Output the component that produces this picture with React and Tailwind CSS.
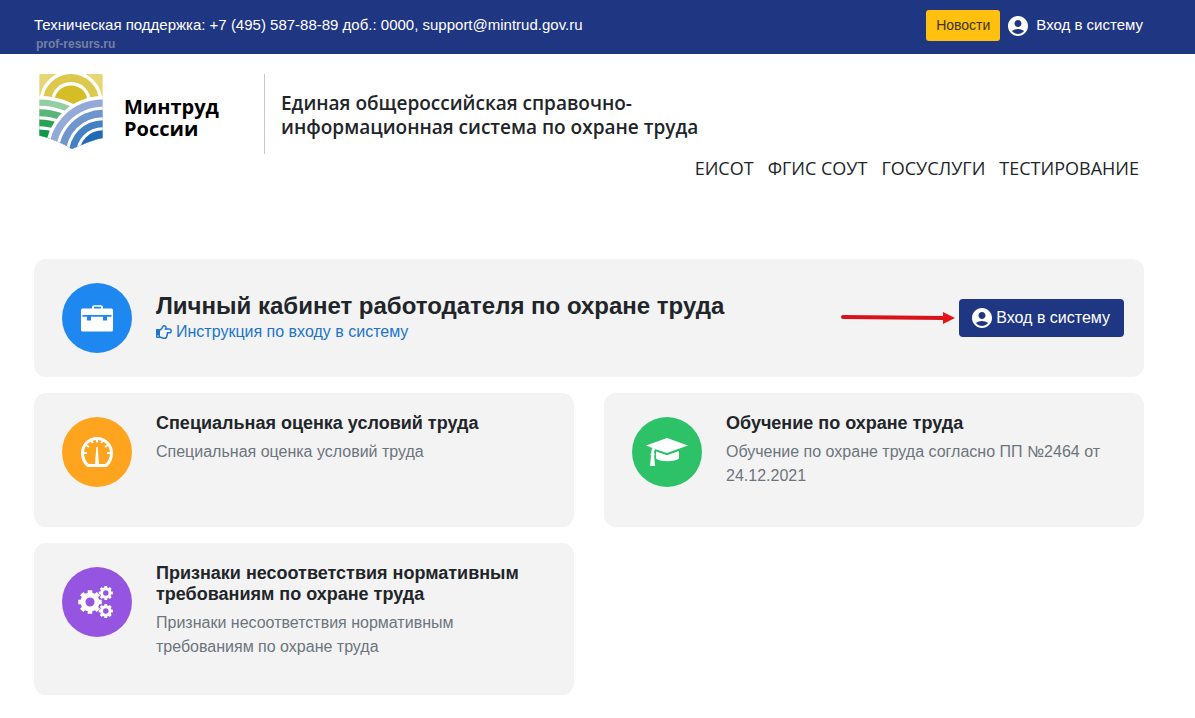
import { MdAccountCircle } from "react-icons/md";
import { FaRegHandPointRight } from "react-icons/fa";

const sans = "font-['Liberation_Sans',Arial,sans-serif]";
const segoe = "font-['Open_Sans','Noto_Sans',sans-serif]";

function Logo() {
  return (
    <svg viewBox="60 42 190 224" className="h-[75px] w-16 shrink-0" aria-hidden="true">
      <defs>
        <clipPath id="shield">
          <path d="M60 42H250V233Q220 238 158 266Q110 238 60 226Z" />
        </clipPath>
      </defs>
      <g clipPath="url(#shield)">
        <rect x="60" y="42" width="190" height="224" fill="#fff" />
        <circle cx="155" cy="126" r="125" fill="#e6d676" />
        <circle cx="155" cy="126" r="94" fill="#fff" />
        <circle cx="155" cy="126" r="84" fill="#ddc84e" />
        <circle cx="155" cy="126" r="60" fill="#fff" />
        <circle cx="155" cy="126" r="50" fill="#d5bd25" />
        <circle cx="60" cy="341" r="233" fill="#fff" />
        <circle cx="60" cy="341" r="223" fill="#93cda3" />
        <circle cx="60" cy="341" r="204" fill="#fff" />
        <circle cx="60" cy="341" r="194" fill="#5cb578" />
        <circle cx="60" cy="341" r="173" fill="#fff" />
        <circle cx="60" cy="341" r="163" fill="#28a254" />
        <circle cx="60" cy="341" r="143" fill="#fff" />
        <circle cx="60" cy="341" r="133" fill="#0f9847" />
        <circle cx="250" cy="281" r="173" fill="#fff" />
        <circle cx="250" cy="281" r="163" fill="#93aad8" />
        <circle cx="250" cy="281" r="141" fill="#fff" />
        <circle cx="250" cy="281" r="132" fill="#6f95cd" />
        <circle cx="250" cy="281" r="110" fill="#fff" />
        <circle cx="250" cy="281" r="101" fill="#4381c2" />
        <circle cx="250" cy="281" r="80" fill="#fff" />
        <circle cx="250" cy="281" r="71" fill="#2069b5" />
      </g>
    </svg>
  );
}

function BriefcaseIcon() {
  return (
    <svg viewBox="0 0 32 27" className="h-[27px] w-8" fill="#fff" fillRule="evenodd" aria-hidden="true">
      <path d="M11 3.500V2Q11 .2 13 .2H20Q22 .2 22 2V3.500H30.500Q32 3.500 32 5V25Q32 26.500 30.500 26.500H1.500Q0 26.500 0 25V5Q0 3.500 1.500 3.500ZM13 3.500H20V1.800H13ZM1.500 10V11.700H6V15.500H10V11.700H22V15.500H26V11.700H30.500V10Z" />
    </svg>
  );
}

function GaugeIcon() {
  return (
    <svg viewBox="0 0 32 32" className="size-8" fill="none" stroke="#fff" aria-hidden="true">
      <path d="M7 29.500C3.500 26.500 1.500 22 1.500 17A14.500 14.500 0 0 1 30.500 17C30.500 22 28.500 26.500 25 29.500Z" strokeWidth="3" strokeLinejoin="round" />
      <path d="M3 17H6M29 17H26M5 9L8 11M27 9L24 11M10 4L11.800 7M22 4L20.200 7M16 3V6.500" strokeWidth="2" />
      <path d="M15.300 11H16.700L18 29H14Z" fill="#fff" stroke="none" />
    </svg>
  );
}

function CapIcon() {
  return (
    <svg viewBox="0 0 42 28" className="h-7 w-[42px]" fill="#fff" aria-hidden="true">
      <path d="M21 0L42 7.500L30.500 11.500L21 15L9.500 11.200Q8 11.800 8 14.500Q9.500 16 8.200 18L9 28H4L5 18Q3.800 16 5.300 14.500Q5.300 11.500 6.500 10L0 7.500Z" />
      <path d="M10 13.500L21 17.300L33 13V20.500Q29.500 23.200 21.500 23.200Q13 23.200 10 20.500Z" />
    </svg>
  );
}

function gear(cx, cy, r, teeth) {
  const pts = [];
  const step = (Math.PI * 2) / teeth;
  for (let i = 0; i < teeth; i++) {
    for (const [offset, k] of [[-0.3, 0.8], [-0.25, 1], [0.25, 1], [0.3, 0.8]]) {
      const a = (i + offset) * step;
      pts.push(`${(cx + Math.sin(a) * r * k).toFixed(2)} ${(cy - Math.cos(a) * r * k).toFixed(2)}`);
    }
  }
  const h = r * 0.38;
  return `M${pts.join("L")}ZM${cx - h} ${cy}a${h} ${h} 0 1 0 ${2 * h} 0a${h} ${h} 0 1 0 ${-2 * h} 0Z`;
}

function GearsIcon() {
  return (
    <svg viewBox="0 0 38 32" className="h-8 w-[38px]" fill="#fff" fillRule="evenodd" aria-hidden="true">
      <path d={gear(12, 16, 12, 8)} />
      <path d={gear(27.8, 7, 7.2, 8)} />
      <path d={gear(27.8, 25, 7.2, 8)} />
    </svg>
  );
}

function Badge({ color, children }) {
  return <div className={`flex size-[70px] shrink-0 items-center justify-center rounded-full ${color}`}>{children}</div>;
}

function Card({ color, icon, title, text }) {
  return (
    <article className="flex min-h-[134px] gap-6 rounded-xl bg-[#f3f3f3] px-7 pt-5 pb-9">
      <div className="pt-1">
        <Badge color={color}>{icon}</Badge>
      </div>
      <div className="min-w-0">
        <h3 className="text-lg leading-[21px] font-bold text-[#212529]">{title}</h3>
        <p className="mt-[6px] text-base leading-6 text-[#6c757d]">{text}</p>
      </div>
    </article>
  );
}

export default function App() {
  return (
    <div className={`min-h-screen bg-white text-[#212529] ${sans}`}>
      <div className="flex h-[54px] items-start justify-between bg-[#1f3683] pr-[52px] pl-[34px] text-white">
        <div className="pt-[14px]">
          <p className="text-[15px] leading-[22px]">Техническая поддержка: +7 (495) 587-88-89 доб.: 0000, support@mintrud.gov.ru</p>
          <p className="pl-[2px] text-xs leading-4 font-bold text-[#7680a0]">prof-resurs.ru</p>
        </div>
        <div className="flex items-center gap-[6px] pt-[10px]">
          <a href="#news" className="rounded-[3px] bg-[#ffc00f] px-[10px] text-sm leading-[31px] text-[#3b3420]">Новости</a>
          <a href="#login" className="flex items-center gap-[6px] text-[15px]">
            <MdAccountCircle className="size-6" />
            Вход в систему
          </a>
        </div>
      </div>

      <header className={`pr-[56px] pl-[39px] ${segoe}`}>
        <div className="flex pt-5">
          <Logo />
          <p className="mt-[22px] ml-[21px] w-[140px] text-xl leading-[22px] font-bold text-black">Минтруд<br />России</p>
          <h1 className="h-20 border-l border-[#c8c8c8] pt-[17px] pl-4 text-[19px] leading-6 font-semibold">
            Единая общероссийская справочно-<br />информационная система по охране труда
          </h1>
        </div>
        <nav className="flex justify-end gap-[14px] text-lg leading-7">
          <a href="#eisot">ЕИСОТ</a>
          <a href="#sout">ФГИС СОУТ</a>
          <a href="#gosuslugi">ГОСУСЛУГИ</a>
          <a href="#testing">ТЕСТИРОВАНИЕ</a>
        </nav>
      </header>

      <main className="pt-[77px] pr-[51px] pb-6 pl-[34px]">
        <section className="flex h-[118px] items-center rounded-xl bg-[#f3f3f3] pr-5 pl-7">
          <Badge color="bg-[#1e88f0]"><BriefcaseIcon /></Badge>
          <div className="ml-6">
            <h2 className="text-2xl leading-7 font-bold">Личный кабинет работодателя по охране труда</h2>
            <a href="#manual" className="flex items-center gap-1 text-base leading-6 text-[#2073cc]">
              <FaRegHandPointRight className="size-4" />
              Инструкция по входу в систему
            </a>
          </div>
          <svg viewBox="0 0 114 14" className="mr-1 ml-auto h-[14px] w-[114px] shrink-0" aria-hidden="true">
            <path d="M2 6L104 7" stroke="#d8131b" strokeWidth="4" strokeLinecap="round" />
            <path d="M102 1L114 7L102 13Z" fill="#e8121a" />
          </svg>
          <button type="button" className="flex h-[38px] shrink-0 items-center gap-[2px] rounded bg-[#1f3683] pr-[14px] pl-[11px] text-base text-white">
            <MdAccountCircle className="size-6" />
            Вход в систему
          </button>
        </section>
        <div className="mt-4 grid grid-cols-2 gap-x-[30px] gap-y-4">
          <Card color="bg-[#ffa41f]" icon={<GaugeIcon />} title="Специальная оценка условий труда" text="Специальная оценка условий труда" />
          <Card color="bg-[#2dc268]" icon={<CapIcon />} title="Обучение по охране труда" text="Обучение по охране труда согласно ПП №2464 от 24.12.2021" />
          <Card color="bg-[#9655e0]" icon={<GearsIcon />} title="Признаки несоответствия нормативным требованиям по охране труда" text="Признаки несоответствия нормативным требованиям по охране труда" />
        </div>
      </main>
    </div>
  );
}
